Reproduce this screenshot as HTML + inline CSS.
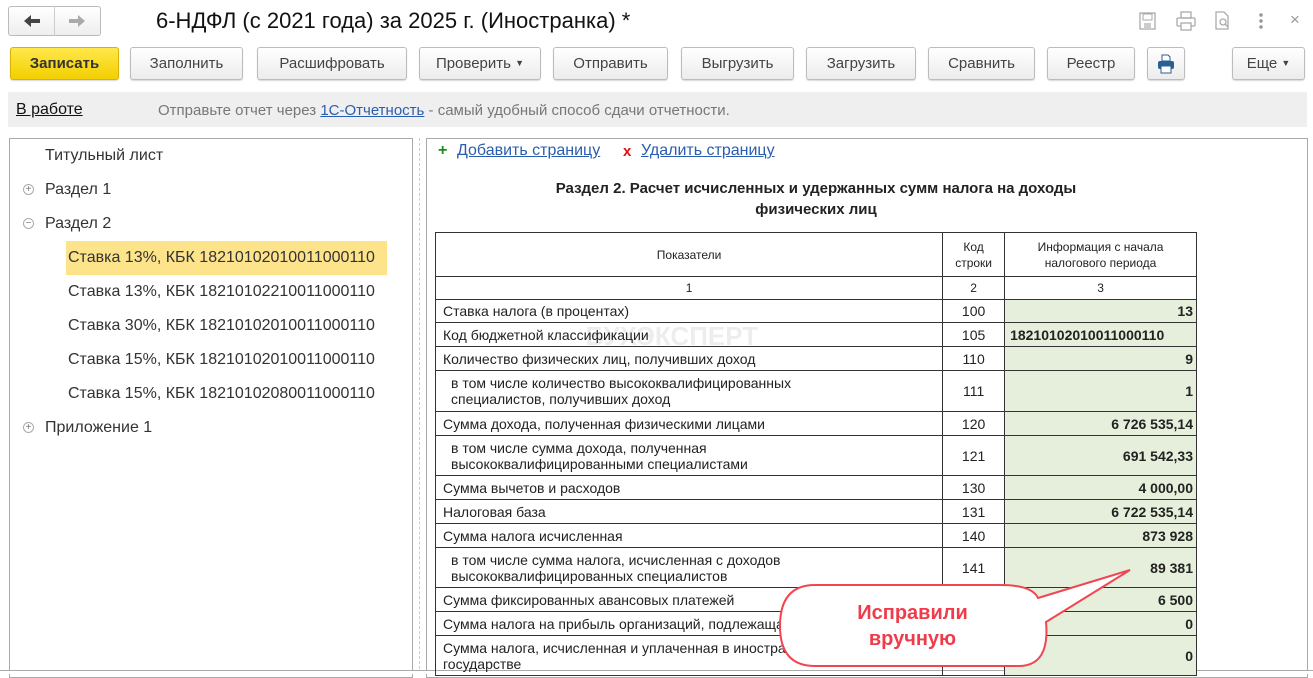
<!DOCTYPE html>
<html><head><meta charset="utf-8"><style>
*{box-sizing:border-box;margin:0;padding:0}
body{width:1313px;height:674px;overflow:hidden;background:#fff;font-family:"Liberation Sans","Noto Sans CJK SC",sans-serif;color:#333;position:relative}
.a{position:absolute}
.btn{position:absolute;top:47px;height:33px;border:1px solid #bcbcbc;border-radius:3px;background:linear-gradient(#fff,#ececec);font-size:15px;color:#444;text-align:center;line-height:31px;box-shadow:0 1px 1px rgba(0,0,0,.15)}
.tree{position:absolute;font-size:16px;color:#333}
.pm{position:absolute;width:11px;height:11px;border:1px solid #aaa;border-radius:50%;font-size:10px;line-height:9px;text-align:center;color:#777}
table{border-collapse:collapse;position:absolute;left:435px;top:232px;width:762px;font-size:14px;color:#222}
td{border:1px solid #333;padding:0 7px;vertical-align:middle}
td.c{text-align:center;padding:0}
td.v{background:#e6efdb;text-align:right;font-weight:bold;padding-right:3px}
td.i{padding-left:15px;line-height:16px}
</style></head><body>
<!-- nav -->
<div class="a" style="left:8px;top:6px;width:93px;height:30px;border:1px solid #bbb;border-radius:3px;background:linear-gradient(#fff,#eee)"></div>
<div class="a" style="left:54px;top:6px;width:1px;height:30px;background:#ccc"></div>
<svg class="a" style="left:22px;top:13px" width="20" height="16" viewBox="0 0 20 16"><path d="M2 8l7-6v4h9v4H9v4z" fill="#444"/></svg>
<svg class="a" style="left:67px;top:13px" width="20" height="16" viewBox="0 0 20 16"><path d="M18 8l-7-6v4H2v4h9v4z" fill="#aaa"/></svg>
<div class="a" style="left:156px;top:8px;font-size:22px;color:#111">6-НДФЛ (с 2021 года) за 2025 г. (Иностранка) *</div>
<!-- top right icons -->
<svg class="a" style="left:1138px;top:11px" width="20" height="20" viewBox="0 0 20 20"><rect x="2" y="2" width="15" height="16" fill="none" stroke="#aaa" stroke-width="1.3"/><rect x="5" y="3" width="9" height="6" fill="none" stroke="#aaa"/><rect x="6" y="12" width="7" height="6" fill="#ccc"/></svg>
<svg class="a" style="left:1175px;top:11px" width="22" height="20" viewBox="0 0 22 20"><rect x="6" y="1" width="10" height="6" fill="none" stroke="#aaa" stroke-width="1.3"/><rect x="2" y="7" width="18" height="8" rx="1" fill="none" stroke="#aaa" stroke-width="1.3"/><rect x="6" y="12" width="10" height="7" fill="#fff" stroke="#aaa" stroke-width="1.3"/></svg>
<svg class="a" style="left:1213px;top:11px" width="20" height="20" viewBox="0 0 20 20"><path d="M3 1h8l4 4v13H3z" fill="none" stroke="#aaa" stroke-width="1.3"/><circle cx="10" cy="11" r="3" fill="none" stroke="#aaa" stroke-width="1.3"/><path d="M12 13l3 3" stroke="#aaa" stroke-width="1.3"/></svg>
<div class="a" style="left:1259px;top:12px;width:4px;height:18px;background:radial-gradient(circle,#999 1.6px,transparent 2px) 0 0/4px 6px"></div>
<div class="a" style="left:1290px;top:10px;font-size:17px;color:#999">×</div>
<!-- buttons -->
<div class="btn" style="left:10px;width:109px;background:linear-gradient(#ffe84a,#f3cf00);border-color:#d6b400;color:#333;font-weight:bold">Записать</div>
<div class="btn" style="left:130px;width:113px">Заполнить</div>
<div class="btn" style="left:257px;width:150px">Расшифровать</div>
<div class="btn" style="left:419px;width:122px">Проверить <span style="font-size:9px;vertical-align:2px">▼</span></div>
<div class="btn" style="left:553px;width:115px">Отправить</div>
<div class="btn" style="left:681px;width:113px">Выгрузить</div>
<div class="btn" style="left:806px;width:110px">Загрузить</div>
<div class="btn" style="left:928px;width:107px">Сравнить</div>
<div class="btn" style="left:1047px;width:88px">Реестр</div>
<div class="btn" style="left:1147px;width:38px"><svg style="margin-top:6px" width="18" height="20" viewBox="0 0 18 20"><path d="M5 1h6l2 2v4H5z" fill="#fff" stroke="#2b5f91"/><rect x="1" y="7" width="16" height="8" rx="2" fill="#2b5f91"/><rect x="4" y="12" width="10" height="7" fill="#fff" stroke="#2b5f91"/></svg></div>
<div class="btn" style="left:1232px;width:73px">Еще <span style="font-size:9px;vertical-align:2px">▼</span></div>
<!-- info bar -->
<div class="a" style="left:8px;top:92px;width:1299px;height:35px;background:#efefef"></div>
<div class="a" style="left:16px;top:101px;font-size:16px;color:#111;text-decoration:underline">В работе</div>
<div class="a" style="left:158px;top:102px;font-size:15px;color:#777">Отправьте отчет через <span style="color:#2a5db0;text-decoration:underline">1С-Отчетность</span> - самый удобный способ сдачи отчетности.</div>
<!-- left panel -->
<div class="a" style="left:9px;top:138px;width:404px;height:540px;border:1px solid #aaa"></div>
<div class="a" style="left:419px;top:138px;width:0;height:536px;border-left:1px dashed #ccc"></div>
<div class="tree" style="left:45px;top:147px">Титульный лист</div>
<div class="pm" style="left:23px;top:184px">+</div>
<div class="tree" style="left:45px;top:181px">Раздел 1</div>
<div class="pm" style="left:23px;top:218px">−</div>
<div class="tree" style="left:45px;top:215px">Раздел 2</div>
<div class="a" style="left:66px;top:241px;width:321px;height:34px;background:#fde38a"></div>
<div class="tree" style="left:68px;top:249px">Ставка 13%, КБК 18210102010011000110</div>
<div class="tree" style="left:68px;top:283px">Ставка 13%, КБК 18210102210011000110</div>
<div class="tree" style="left:68px;top:317px">Ставка 30%, КБК 18210102010011000110</div>
<div class="tree" style="left:68px;top:351px">Ставка 15%, КБК 18210102010011000110</div>
<div class="tree" style="left:68px;top:385px">Ставка 15%, КБК 18210102080011000110</div>
<div class="pm" style="left:23px;top:422px">+</div>
<div class="tree" style="left:45px;top:419px">Приложение 1</div>
<!-- right panel -->
<div class="a" style="left:426px;top:138px;width:882px;height:540px;border:1px solid #aaa"></div>
<div class="a" style="left:0;top:670px;width:1313px;height:4px;background:#fff;border-top:1px solid #aaa"></div>
<div class="a" style="left:438px;top:142px;font-size:16px;color:#1a8a1a;font-weight:bold">+</div>
<div class="a" style="left:457px;top:142px;font-size:16px;color:#2a5db0;text-decoration:underline">Добавить страницу</div>
<div class="a" style="left:623px;top:143px;font-size:15px;color:#e01010;font-weight:bold">x</div>
<div class="a" style="left:641px;top:142px;font-size:16px;color:#2a5db0;text-decoration:underline">Удалить страницу</div>
<div class="a" style="left:500px;top:178px;width:632px;text-align:center;font-size:15px;font-weight:bold;color:#222;line-height:21px">Раздел 2. Расчет исчисленных и удержанных сумм налога на доходы<br>физических лиц</div>
<table>
<colgroup><col style="width:508px"><col style="width:62px"><col style="width:192px"></colgroup>
<tr style="height:44px;font-size:12px"><td class="c" style="line-height:16px">Показатели</td><td class="c" style="line-height:16px">Код<br>строки</td><td class="c" style="line-height:16px">Информация с начала<br>налогового периода</td></tr>
<tr style="height:23px;font-size:12px"><td class="c">1</td><td class="c">2</td><td class="c">3</td></tr>
<tr style="height:23px"><td>Ставка налога (в процентах)</td><td class="c">100</td><td class="v">13</td></tr>
<tr style="height:24px"><td>Код бюджетной классификации<span style="position:absolute;left:150px;margin-top:-6px;font-size:26px;font-weight:bold;color:rgba(0,0,0,.07)">БУХЭКСПЕРТ</span></td><td class="c">105</td><td class="v" style="text-align:left;padding-left:5px">18210102010011000110</td></tr>
<tr style="height:24px"><td>Количество физических лиц, получивших доход</td><td class="c">110</td><td class="v">9</td></tr>
<tr style="height:41px"><td class="i">в том числе количество высококвалифицированных<br>специалистов, получивших доход</td><td class="c">111</td><td class="v">1</td></tr>
<tr style="height:24px"><td>Сумма дохода, полученная физическими лицами</td><td class="c">120</td><td class="v">6 726 535,14</td></tr>
<tr style="height:40px"><td class="i">в том числе сумма дохода, полученная<br>высококвалифицированными специалистами</td><td class="c">121</td><td class="v">691 542,33</td></tr>
<tr style="height:24px"><td>Сумма вычетов и расходов</td><td class="c">130</td><td class="v">4 000,00</td></tr>
<tr style="height:24px"><td>Налоговая база</td><td class="c">131</td><td class="v">6 722 535,14</td></tr>
<tr style="height:24px"><td>Сумма налога исчисленная</td><td class="c">140</td><td class="v">873 928</td></tr>
<tr style="height:40px"><td class="i">в том числе сумма налога, исчисленная с доходов<br>высококвалифицированных специалистов</td><td class="c">141</td><td class="v">89 381</td></tr>
<tr style="height:24px"><td>Сумма фиксированных авансовых платежей</td><td class="c">150</td><td class="v">6 500</td></tr>
<tr style="height:24px"><td>Сумма налога на прибыль организаций, подлежащая</td><td class="c">155</td><td class="v">0</td></tr>
<tr style="height:40px"><td style="line-height:16px">Сумма налога, исчисленная и уплаченная в иностранном<br>государстве</td><td class="c">156</td><td class="v">0</td></tr>
</table>
<!-- callout -->
<svg class="a" style="left:770px;top:560px" width="370" height="115" viewBox="0 0 370 115">
<path d="M45 25 H230 Q262 25 268 38 L360 10 L276 62 Q280 105 250 106 H45 Q10 106 10 66 Q10 25 45 25 Z" fill="#fff" stroke="#f04652" stroke-width="2"/>
</svg>
<div class="a" style="left:800px;top:600px;width:225px;text-align:center;font-size:20px;font-weight:bold;color:#f03c4a;line-height:26px">Исправили<br>вручную</div>
</body></html>
